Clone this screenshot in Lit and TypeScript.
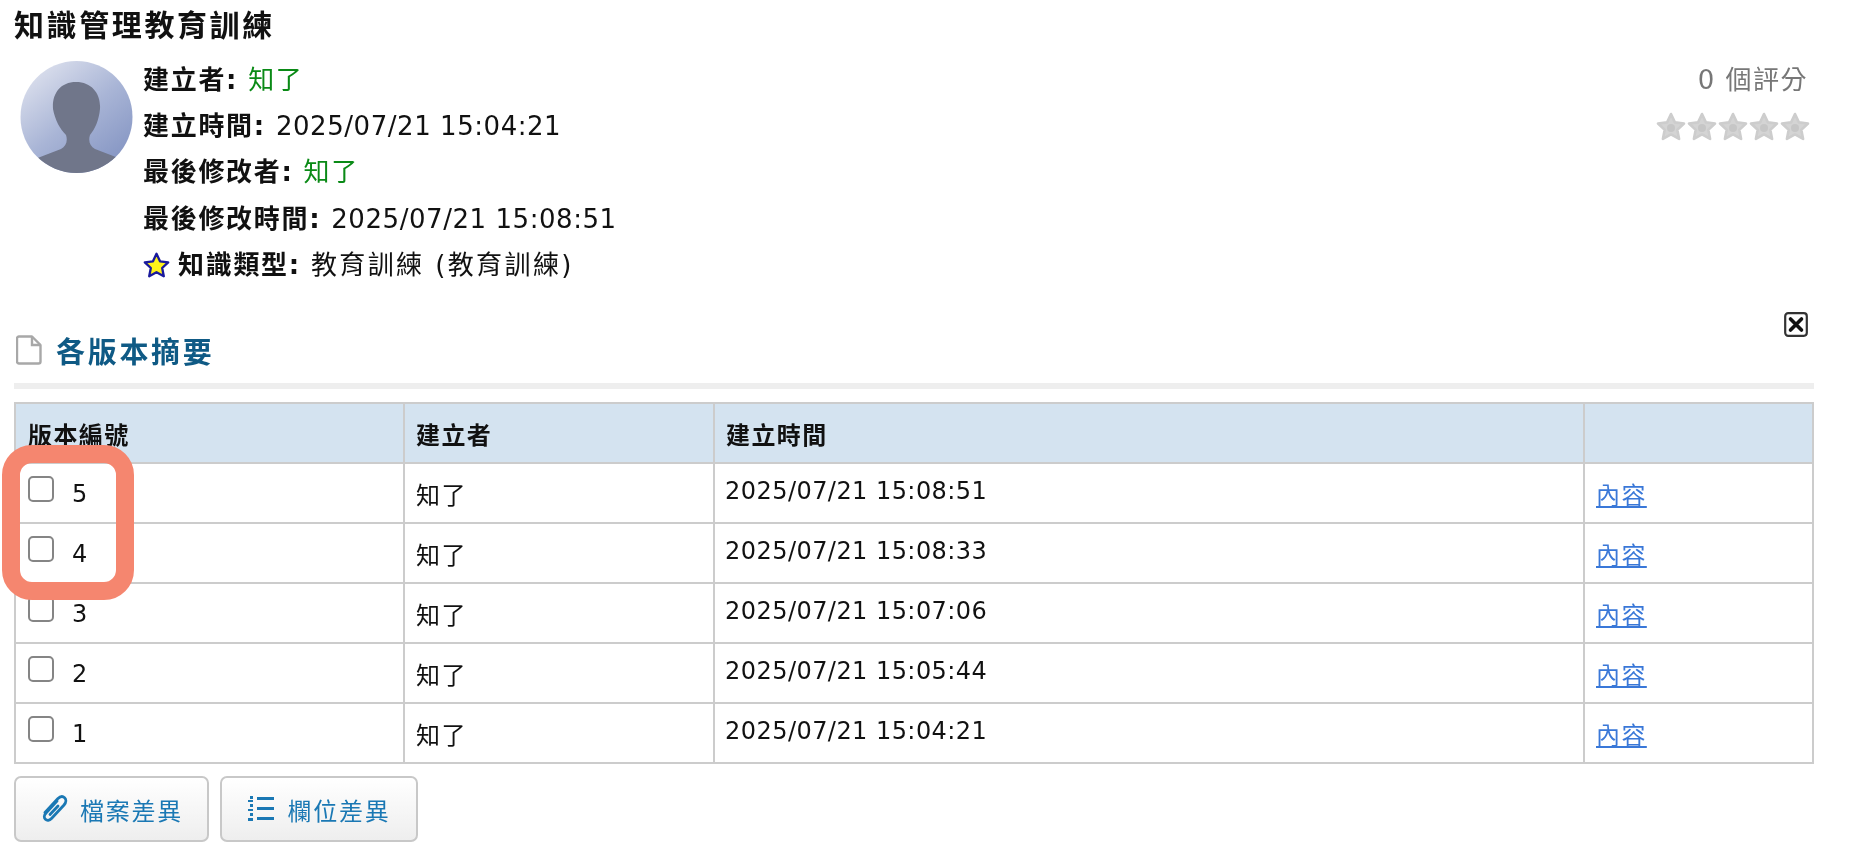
import { LitElement, css, html } from "lit";
import { customElement } from "lit/decorators.js";

const versions = [
  { no: 5, time: "2025/07/21 15:08:51" },
  { no: 4, time: "2025/07/21 15:08:33" },
  { no: 3, time: "2025/07/21 15:07:06" },
  { no: 2, time: "2025/07/21 15:05:44" },
  { no: 1, time: "2025/07/21 15:04:21" },
];

const starPath = "M15 2l3.9 8.4 9.1 1.1-6.7 6.3 1.8 9.1L15 22.4l-8.1 4.5 1.8-9.1L2 11.5l9.1-1.1z";

@customElement("app-root")
export class AppRoot extends LitElement {
  static styles = css`
    :host {
      display: block;
      position: relative;
      height: 850px;
      overflow: hidden;
      background: #fff;
      color: #111;
      font-family: "DejaVu Sans", "Noto Sans CJK TC", sans-serif;
      font-size: 24px;
    }
    .page {
      display: flex;
      flex-direction: column;
      padding: 8px 40px 0 14px;
      filter: blur(0.4px);
    }
    h1 {
      margin: 0;
      height: 36px;
      font-size: 30px;
      line-height: 36px;
      letter-spacing: 2.6px;
      font-weight: 700;
    }
    .summary {
      display: flex;
      height: 280px;
      padding-top: 13px;
      box-sizing: border-box;
    }
    .avatar {
      width: 113px;
      height: 114px;
      margin: 3px 10px 0 6px;
      flex: none;
    }
    .info {
      flex: 1;
      font-size: 26px;
      letter-spacing: 1.7px;
      line-height: 46.2px;
    }
    .info > div {
      height: 46.2px;
      white-space: nowrap;
    }
    .info b {
      font-weight: 700;
    }
    .num {
      letter-spacing: 0.55px;
    }
    .type {
      letter-spacing: 2.4px;
    }
    .green {
      color: #0a8a16;
    }
    .star-icon {
      width: 27px;
      height: 27px;
      vertical-align: -5px;
      margin-right: 8px;
    }
    .rating {
      width: 190px;
      display: flex;
      flex-direction: column;
      align-items: flex-end;
      color: #777;
      font-size: 26px;
      line-height: 46px;
      letter-spacing: 1.5px;
      padding-right: 6px;
      box-sizing: border-box;
    }
    .stars {
      display: flex;
      gap: 1px;
      margin-top: 9px;
      margin-right: -2px;
    }
    .stars svg {
      width: 30px;
      height: 30px;
    }
    .section-head {
      display: flex;
      align-items: center;
      gap: 14px;
      height: 52px;
      padding-left: 2px;
      padding-bottom: 7px;
      box-sizing: content-box;
      border-bottom: 6px solid #eeeeee;
      color: #0f5a85;
      font-size: 29px;
      font-weight: 700;
      letter-spacing: 2.7px;
      position: relative;
    }
    .close {
      position: absolute;
      right: 6px;
      top: -12px;
      width: 24px;
      height: 25px;
    }
    table {
      width: 1798px;
      margin-top: 13px;
      border-collapse: collapse;
      table-layout: fixed;
      letter-spacing: 1.4px;
    }
    th,
    td {
      height: 58px;
      padding: 0 10px 0 11px;
      border: 2px solid #cccccc;
      text-align: left;
      box-sizing: border-box;
    }
    th:first-child,
    td:first-child {
      padding-left: 12px;
    }
    tr {
      height: 60px;
    }
    th {
      background: #d4e3f0;
      font-weight: 700;
    }
    .no {
      display: flex;
      align-items: center;
      gap: 18px;
      padding-top: 2px;
    }
    .check {
      width: 26px;
      height: 26px;
      border: 2px solid #858585;
      border-radius: 5px;
      box-sizing: border-box;
      margin-top: -10px;
      flex: none;
    }
    .date {
      display: block;
      margin-left: -1px;
      margin-top: -1px;
      padding-bottom: 3px;
      letter-spacing: 0.45px;
    }
    a {
      color: #3a78d8;
      text-decoration: underline;
    }
    .actions {
      display: flex;
      gap: 11px;
      margin-top: 12px;
    }
    button {
      display: flex;
      align-items: center;
      justify-content: center;
      gap: 12px;
      height: 66px;
      padding: 0;
      border: 2px solid #c8c8c8;
      border-radius: 7px;
      background: linear-gradient(#ffffff, #eeeeee);
      color: #1a78b4;
      font: inherit;
      letter-spacing: 1.8px;
    }
    .b1 {
      width: 195px;
    }
    .b2 {
      width: 198px;
    }
    .highlight {
      position: absolute;
      left: 2px;
      top: 445px;
      width: 132px;
      height: 155px;
      border: 18px solid #f5866f;
      border-radius: 30px;
      box-sizing: border-box;
    }
  `;

  avatar() {
    return html`<svg class="avatar" viewBox="0 0 113 114">
      <defs>
        <linearGradient id="bg" x1="0.1" y1="0" x2="0.9" y2="1">
          <stop offset="0" stop-color="#e2e5f0"></stop>
          <stop offset="0.5" stop-color="#a9b5d6"></stop>
          <stop offset="1" stop-color="#7f90c0"></stop>
        </linearGradient>
        <clipPath id="circle"><circle cx="56.5" cy="57" r="56"></circle></clipPath>
      </defs>
      <circle cx="56.5" cy="57" r="56" fill="url(#bg)"></circle>
      <g clip-path="url(#circle)">
        <path
          fill="#70768a"
          d="M56 22c16 0 25 12 24 27-1 11-5 20-10 26-2 6 0 11 5 14l26 10v20H15V99l26-10c5-3 7-8 5-14-6-6-11-15-13-26-1-15 7-27 23-27z"
        ></path>
      </g>
    </svg>`;
  }

  greyStar() {
    return html`<svg viewBox="0 0 30 30">
      <path d=${starPath} fill="#d4d4d4" stroke="#cdcdcd" stroke-width="2.6" stroke-linejoin="round"></path>
      <circle cx="15" cy="16" r="4" fill="#c6c6c6"></circle>
    </svg>`;
  }

  row(v: { no: number; time: string }) {
    return html`<tr>
      <td>
        <div class="no"><span class="check"></span><span>${v.no}</span></div>
      </td>
      <td>知了</td>
      <td><span class="date">${v.time}</span></td>
      <td><a href="#">內容</a></td>
    </tr>`;
  }

  render() {
    return html`
      <div class="page">
        <h1>知識管理教育訓練</h1>
        <div class="summary">
          ${this.avatar()}
          <div class="info">
            <div><b>建立者:</b> <span class="green">知了</span></div>
            <div><b>建立時間:</b> <span class="num">2025/07/21 15:04:21</span></div>
            <div><b>最後修改者:</b> <span class="green">知了</span></div>
            <div><b>最後修改時間:</b> <span class="num">2025/07/21 15:08:51</span></div>
            <div>
              <svg class="star-icon" viewBox="0 0 30 30">
                <path d=${starPath} fill="#fff21a" stroke="#1a1a9c" stroke-width="2.6" stroke-linejoin="round"></path></svg
              ><b>知識類型:</b> <span class="type">教育訓練 (教育訓練)</span>
            </div>
          </div>
          <div class="rating">
            <div>0 個評分</div>
            <div class="stars">
              ${[0, 1, 2, 3, 4].map(() => this.greyStar())}
            </div>
          </div>
        </div>
        <div class="section-head">
          <svg width="26" height="30" viewBox="0 0 26 30" fill="none" stroke="#a8a8a8" stroke-width="2.4">
            <path stroke-linejoin="round" d="M3 1.500h13l8.500 8.500v16.500a2 2 0 0 1-2 2H3a2 2 0 0 1-2-2v-23a2 2 0 0 1 2-2z"></path>
            <path d="M16 1.500V10h8.500"></path>
          </svg>
          <span>各版本摘要</span>
          <svg class="close" viewBox="0 0 24 25">
            <rect x="1.200" y="1.200" width="21.600" height="22.600" rx="3" fill="#fff" stroke="#333" stroke-width="2.200"></rect>
            <path d="M6.500 7l11 11M17.500 7l-11 11" stroke="#111" stroke-width="3.600" stroke-linecap="round"></path>
          </svg>
        </div>
        <table>
          <colgroup>
            <col style="width:389px" />
            <col style="width:310px" />
            <col style="width:870px" />
            <col style="width:229px" />
          </colgroup>
          <thead>
            <tr>
              <th>版本編號</th>
              <th>建立者</th>
              <th>建立時間</th>
              <th></th>
            </tr>
          </thead>
          <tbody>
            ${versions.map((v) => this.row(v))}
          </tbody>
        </table>
        <div class="actions">
          <button class="b1">
            <svg width="28" height="28" viewBox="0 0 28 28" fill="none" stroke="#1a78b4" stroke-width="2.800" stroke-linecap="round" stroke-linejoin="round">
              <path d="M17 6 6 18c-2 2.200-2.200 4.800-.6 6.300s4.100 1.300 6.100-.8L24 10c2.400-2.800 2.300-5.700.6-7.300s-4.400-1.500-6.900 1.100L5 17.500"></path>
              <path d="M18 11 10 19.500"></path>
            </svg>
            <span>檔案差異</span>
          </button>
          <button class="b2">
            <svg width="28" height="28" viewBox="0 0 28 28" fill="#1a78b4">
              <rect x="3" y="1" width="3" height="3"></rect>
              <rect x="1" y="5" width="5" height="2"></rect>
              <rect x="3" y="9" width="3" height="3"></rect>
              <rect x="1" y="14" width="5" height="2"></rect>
              <rect x="3" y="18" width="3" height="3"></rect>
              <rect x="1" y="23" width="5" height="3"></rect>
              <rect x="10" y="2" width="17" height="3"></rect>
              <rect x="10" y="12" width="17" height="3"></rect>
              <rect x="10" y="22" width="17" height="3"></rect>
            </svg>
            <span>欄位差異</span>
          </button>
        </div>
      </div>
      <div class="highlight"></div>
    `;
  }
}
